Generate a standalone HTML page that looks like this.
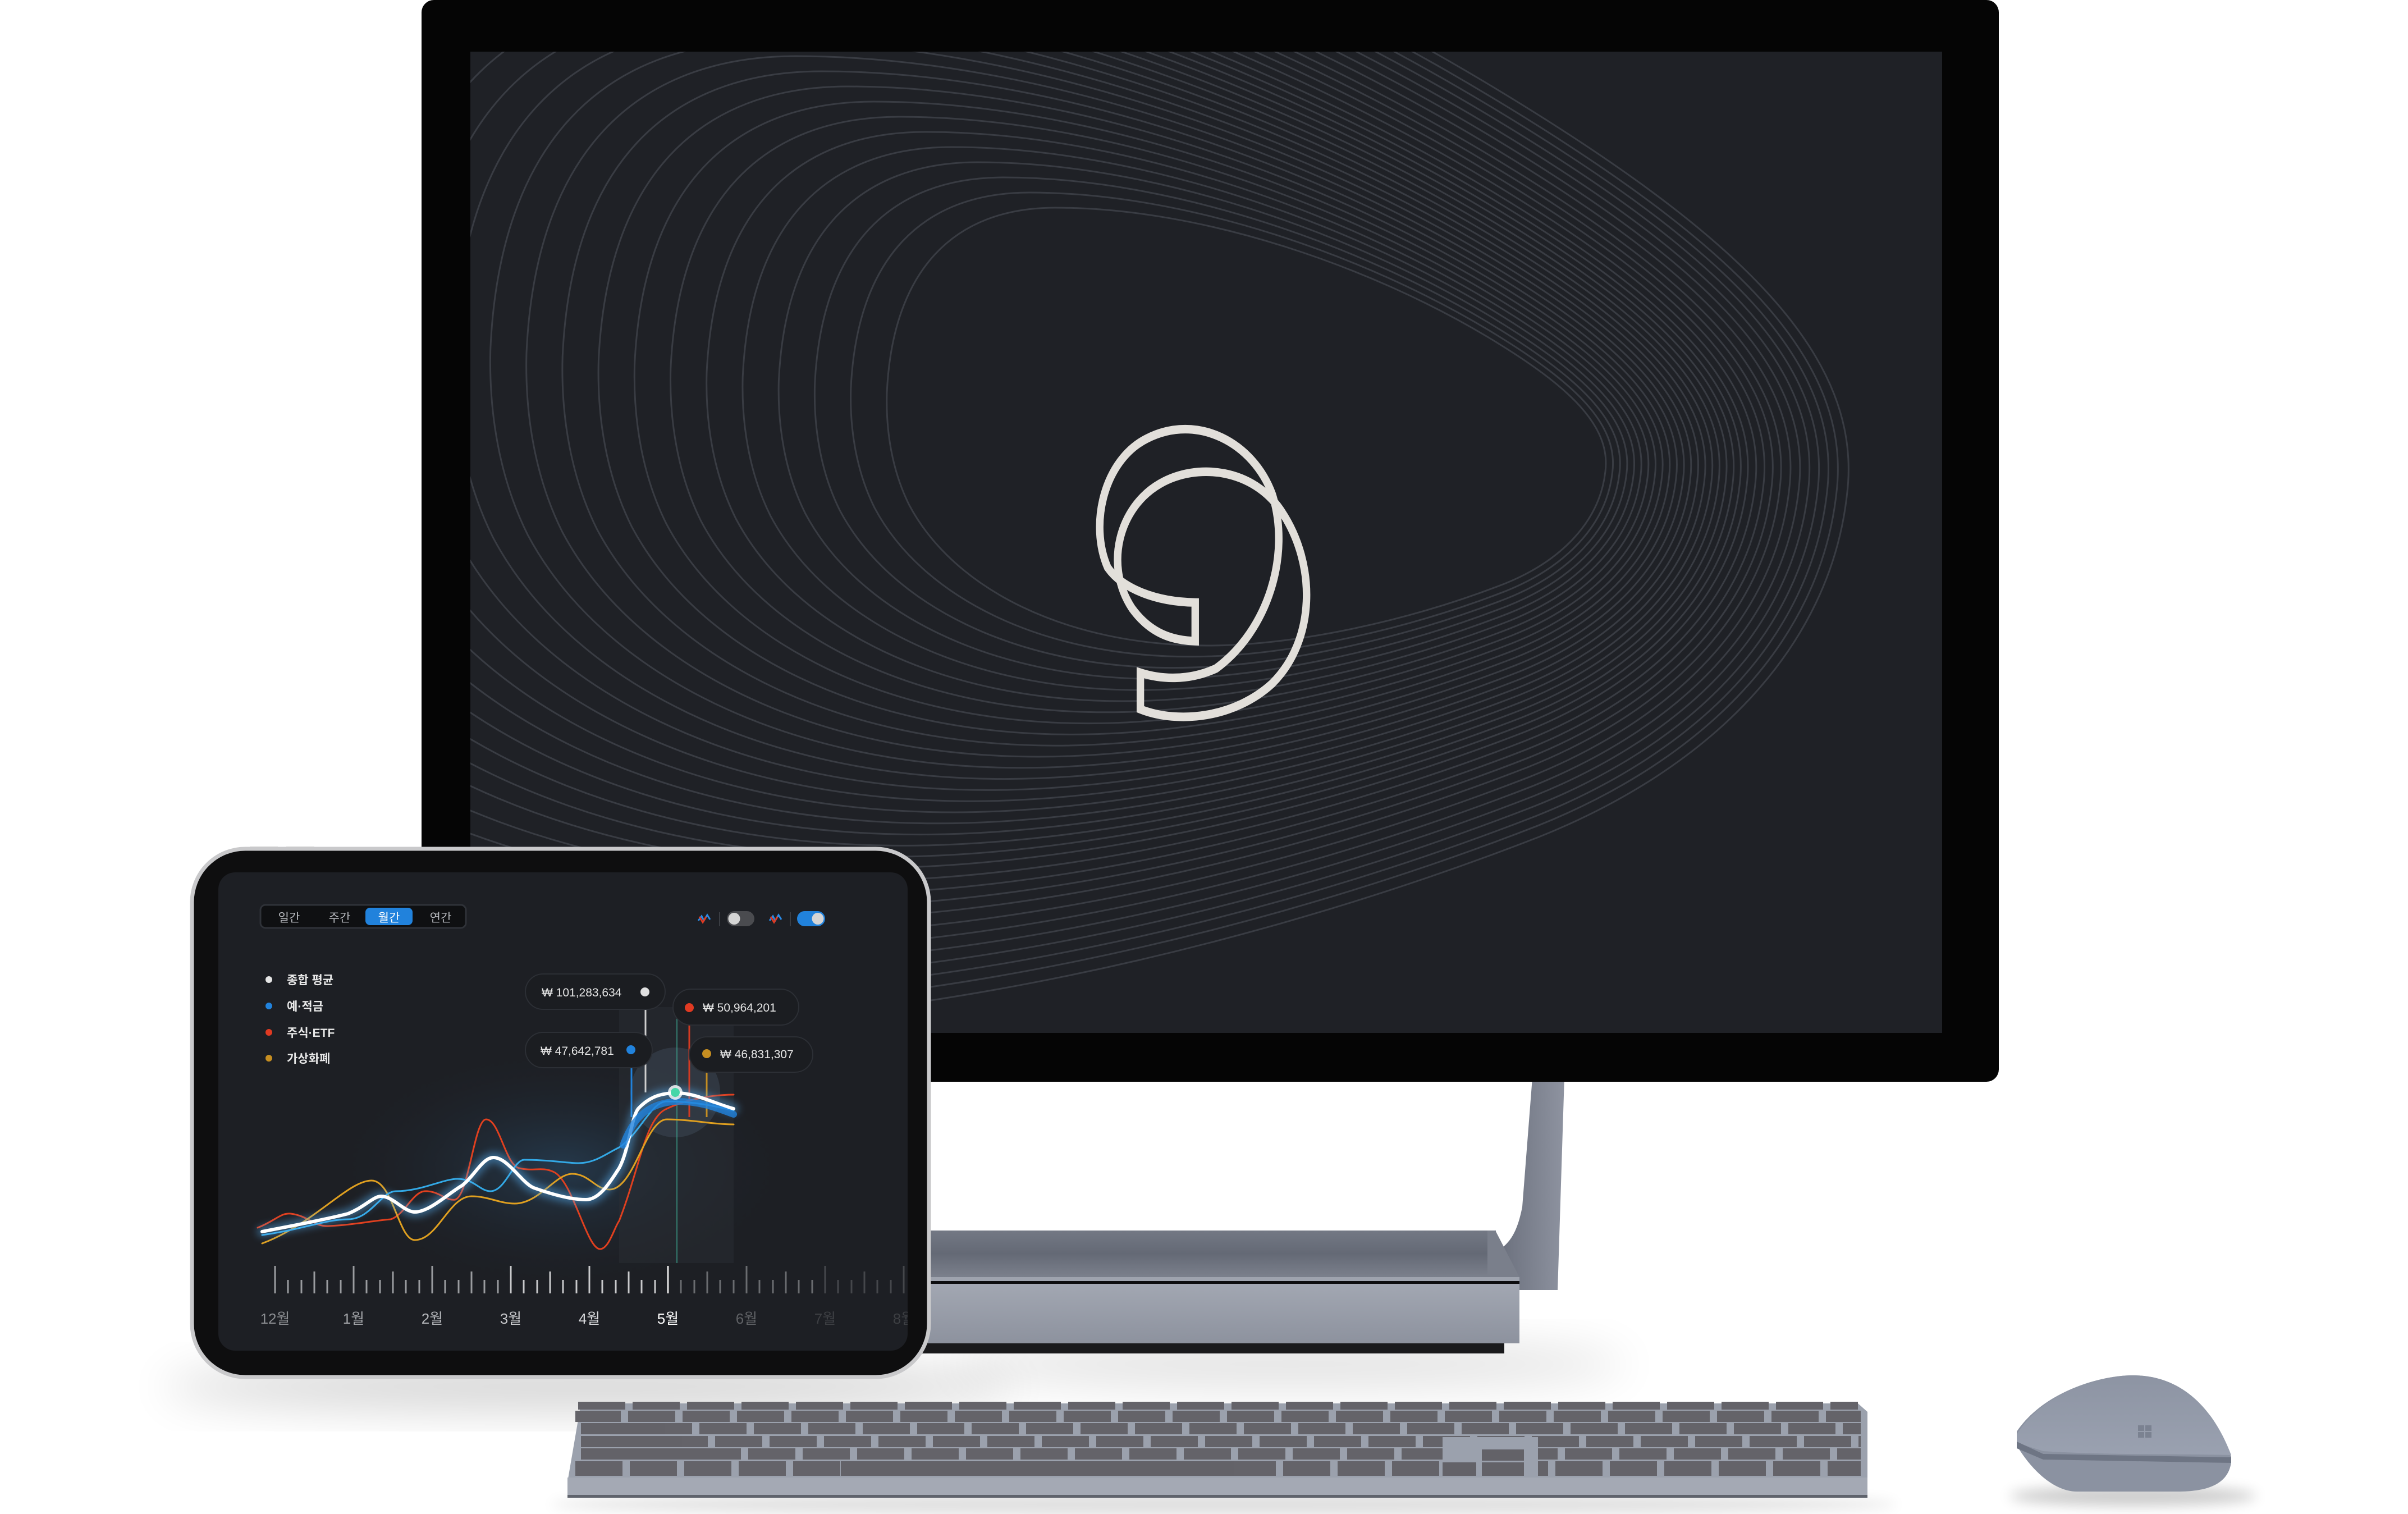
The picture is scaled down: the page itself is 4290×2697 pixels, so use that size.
<!DOCTYPE html>
<html><head><meta charset="utf-8">
<style>
html,body{margin:0;padding:0;background:#fff;width:4290px;height:2697px;overflow:hidden}
svg{display:block}
text{font-family:"Liberation Sans","Noto Sans CJK KR",sans-serif}
</style></head>
<body>
<svg width="4290" height="2697" viewBox="0 0 4290 2697" xmlns="http://www.w3.org/2000/svg">
<defs>
  <filter id="blur40" x="-50%" y="-50%" width="200%" height="200%"><feGaussianBlur stdDeviation="40"/></filter>
  <filter id="blur12" x="-50%" y="-50%" width="200%" height="200%"><feGaussianBlur stdDeviation="12"/></filter>
  <filter id="glow" x="-20%" y="-50%" width="140%" height="200%"><feGaussianBlur stdDeviation="7"/></filter>
  <clipPath id="scr"><rect x="838" y="92" width="2622" height="1748"/></clipPath>
  <clipPath id="tab"><rect x="389" y="1554" width="1228" height="852" rx="30"/></clipPath>
  <clipPath id="kb"><rect x="1025" y="2490" width="2290" height="142"/></clipPath>
  <path id="blob" vector-effect="non-scaling-stroke" d="M1580,700 C1590,480 1700,370 1880,370 C2150,370 2450,480 2650,600 C2800,690 2870,760 2860,840 C2850,930 2780,1000 2680,1040 C2500,1110 2300,1150 2150,1150 C1900,1150 1700,1050 1620,900 C1590,840 1578,770 1580,700 Z"/>
  <linearGradient id="baseTop" x1="0" y1="0" x2="0" y2="1"><stop offset="0" stop-color="#737884"/><stop offset="0.5" stop-color="#646975"/><stop offset="1" stop-color="#7b808c"/></linearGradient>
  <linearGradient id="baseFront" x1="0" y1="0" x2="0" y2="1"><stop offset="0" stop-color="#a2a7b2"/><stop offset="1" stop-color="#8d929e"/></linearGradient>
  <linearGradient id="arm" x1="0" y1="0" x2="1" y2="0"><stop offset="0" stop-color="#4f5360"/><stop offset="0.5" stop-color="#727784"/><stop offset="1" stop-color="#8e93a0"/></linearGradient>
  <linearGradient id="mouseTop" x1="0" y1="0" x2="0" y2="1"><stop offset="0" stop-color="#8d94a3"/><stop offset="1" stop-color="#9aa1b0"/></linearGradient>
  <radialGradient id="chartGlow" cx="0.5" cy="0.5" r="0.5"><stop offset="0" stop-color="#2a4a66" stop-opacity="0.6"/><stop offset="1" stop-color="#1d1f24" stop-opacity="0"/></radialGradient>
  <pattern id="keys" x="1030" y="0" width="97" height="2697" patternUnits="userSpaceOnUse">
    <rect x="0" y="0" width="84" height="2697" fill="#646369"/>
  </pattern>
</defs>

<ellipse cx="1050" cy="2470" rx="760" ry="40" fill="#000" opacity="0.18" filter="url(#blur40)"/>
<ellipse cx="2300" cy="2430" rx="600" ry="40" fill="#000" opacity="0.12" filter="url(#blur40)"/>
<ellipse cx="2180" cy="2680" rx="1200" ry="20" fill="#000" opacity="0.12" filter="url(#blur12)"/>
<ellipse cx="3800" cy="2665" rx="220" ry="18" fill="#000" opacity="0.2" filter="url(#blur12)"/>

<path d="M2730,1920 L2787,1920 L2775,2298 L2600,2298 L2600,2245 C2680,2240 2700,2210 2712,2150 Z" fill="url(#arm)"/>
<rect x="1640" y="2192" width="1025" height="83" fill="url(#baseTop)"/>
<path d="M2650,2192 L2664,2192 L2707,2275 L2650,2275 Z" fill="#7a7f8b"/>
<rect x="1640" y="2275" width="1067" height="7" fill="#9ea3ae"/>
<rect x="1640" y="2282" width="1067" height="5" fill="#0d0d0f"/>
<rect x="1640" y="2287" width="1067" height="106" fill="url(#baseFront)"/>
<rect x="1640" y="2393" width="1040" height="18" fill="#1a1a1c"/>

<rect x="751" y="0" width="2810" height="1927" rx="22" fill="#050505"/>
<rect x="838" y="92" width="2622" height="1748" fill="#1f2126"/>
<g clip-path="url(#scr)" fill="none" stroke="#393c43" stroke-width="3">
    <use href="#blob" transform="translate(2650,820) scale(1.00) translate(-2650,-820)"/>
    <use href="#blob" transform="translate(2650,820) scale(1.06) translate(-2650,-820)"/>
    <use href="#blob" transform="translate(2650,820) scale(1.12) translate(-2650,-820)"/>
    <use href="#blob" transform="translate(2650,820) scale(1.18) translate(-2650,-820)"/>
    <use href="#blob" transform="translate(2650,820) scale(1.24) translate(-2650,-820)"/>
    <use href="#blob" transform="translate(2650,820) scale(1.30) translate(-2650,-820)"/>
    <use href="#blob" transform="translate(2650,820) scale(1.36) translate(-2650,-820)"/>
    <use href="#blob" transform="translate(2650,820) scale(1.42) translate(-2650,-820)"/>
    <use href="#blob" transform="translate(2650,820) scale(1.48) translate(-2650,-820)"/>
    <use href="#blob" transform="translate(2650,820) scale(1.54) translate(-2650,-820)"/>
    <use href="#blob" transform="translate(2650,820) scale(1.60) translate(-2650,-820)"/>
    <use href="#blob" transform="translate(2650,820) scale(1.66) translate(-2650,-820)"/>
    <use href="#blob" transform="translate(2650,820) scale(1.72) translate(-2650,-820)"/>
    <use href="#blob" transform="translate(2650,820) scale(1.78) translate(-2650,-820)"/>
    <use href="#blob" transform="translate(2650,820) scale(1.84) translate(-2650,-820)"/>
    <use href="#blob" transform="translate(2650,820) scale(1.90) translate(-2650,-820)"/>
    <use href="#blob" transform="translate(2650,820) scale(1.96) translate(-2650,-820)"/>
    <use href="#blob" transform="translate(2650,820) scale(2.02) translate(-2650,-820)"/>
    <use href="#blob" transform="translate(2650,820) scale(2.08) translate(-2650,-820)"/>
    <use href="#blob" transform="translate(2650,820) scale(2.14) translate(-2650,-820)"/>
    <use href="#blob" transform="translate(2650,820) scale(2.20) translate(-2650,-820)"/>
    <use href="#blob" transform="translate(2650,820) scale(2.27) translate(-2650,-820)"/>
    <use href="#blob" transform="translate(2650,820) scale(2.34) translate(-2650,-820)"/>
    <use href="#blob" transform="translate(2650,820) scale(2.41) translate(-2650,-820)"/>
    <use href="#blob" transform="translate(2650,820) scale(2.48) translate(-2650,-820)"/>
    <use href="#blob" transform="translate(2650,820) scale(2.56) translate(-2650,-820)"/>
    <use href="#blob" transform="translate(2650,820) scale(2.64) translate(-2650,-820)"/>
    <use href="#blob" transform="translate(2650,820) scale(2.72) translate(-2650,-820)"/>
    <use href="#blob" transform="translate(2650,820) scale(2.80) translate(-2650,-820)"/>
    <use href="#blob" transform="translate(2650,820) scale(2.88) translate(-2650,-820)"/>
    <use href="#blob" transform="translate(2650,820) scale(2.96) translate(-2650,-820)"/>
    <use href="#blob" transform="translate(2650,820) scale(3.05) translate(-2650,-820)"/>
</g>
<g transform="translate(1900,720) scale(0.3333,0.3827)">
  <path d="M688,1103 L688,923 C480,920 300,860 220,760 C120,560 200,260 430,160 C700,40 1000,180 1100,420 C1200,700 1080,1050 800,1230 C650,1290 500,1280 395,1250 L395,1420 C600,1490 900,1460 1100,1300 C1330,1100 1340,750 1150,500 C1000,300 700,270 500,370 C280,480 200,750 350,950 C450,1070 570,1100 688,1103 Z" fill="none" stroke="#e2dfda" stroke-width="40" stroke-linejoin="miter"/>
</g>

<rect x="342" y="1512" width="1313" height="941" rx="95" fill="#0e0e0f" stroke="#c9c9cb" stroke-width="7"/>
<rect x="445" y="1508" width="50" height="5" fill="#c9c9cb"/>
<rect x="510" y="1508" width="50" height="5" fill="#c9c9cb"/>
<rect x="389" y="1554" width="1228" height="852" rx="30" fill="#1d1f24"/>
<g clip-path="url(#tab)">
  <ellipse cx="1000" cy="2080" rx="420" ry="220" fill="url(#chartGlow)"/>
  <rect x="1103" y="1794" width="204" height="456" fill="#2a2d33" opacity="0.5"/>
  <circle cx="1203" cy="1946" r="80" fill="#4a5a6a" opacity="0.35"/>
  <rect x="464" y="1612" width="366" height="41" rx="9" fill="#0f1012" stroke="#2f3238" stroke-width="3"/>
  <rect x="651" y="1617" width="84" height="31" rx="8" fill="#2182dc"/>
  <text x="515" y="1642" font-size="21" fill="#b9bbc0" text-anchor="middle">일간</text>
  <text x="605" y="1642" font-size="21" fill="#b9bbc0" text-anchor="middle">주간</text>
  <text x="693" y="1642" font-size="21" fill="#fff" text-anchor="middle">월간</text>
  <text x="785" y="1642" font-size="21" fill="#b9bbc0" text-anchor="middle">연간</text>
  <path d="M1244,1640 L1250,1632 L1254,1640 L1260,1630 L1265,1638" fill="none" stroke="#2a8ae6" stroke-width="3"/>
  <path d="M1246,1633 L1252,1643 L1258,1633" fill="none" stroke="#e23a22" stroke-width="3"/>
  <rect x="1281" y="1625" width="2" height="25" fill="#3a3d43"/>
  <rect x="1295" y="1623" width="49" height="27" rx="13.5" fill="#4a4b4f"/>
  <circle cx="1308" cy="1636.5" r="10.5" fill="#d5d5d5"/>
  <path d="M1371,1640 L1377,1632 L1381,1640 L1387,1630 L1392,1638" fill="none" stroke="#2a8ae6" stroke-width="3"/>
  <path d="M1373,1633 L1379,1643 L1385,1633" fill="none" stroke="#e23a22" stroke-width="3"/>
  <rect x="1407" y="1625" width="2" height="25" fill="#3a3d43"/>
  <rect x="1420" y="1623" width="50" height="27" rx="13.5" fill="#2182dc"/>
  <circle cx="1457" cy="1636.5" r="10.5" fill="#d5d5d5"/>
  <circle cx="479" cy="1745" r="6" fill="#e5e5e5"/><text x="511" y="1753" font-size="21" font-weight="bold" fill="#e8e8e8">종합 평균</text>
  <circle cx="479" cy="1792" r="6" fill="#2182dc"/><text x="511" y="1800" font-size="21" font-weight="bold" fill="#e8e8e8">예·적금</text>
  <circle cx="479" cy="1839" r="6" fill="#e03a22"/><text x="511" y="1847" font-size="21" font-weight="bold" fill="#e8e8e8">주식·ETF</text>
  <circle cx="479" cy="1885" r="6" fill="#c68e21"/><text x="511" y="1893" font-size="21" font-weight="bold" fill="#e8e8e8">가상화폐</text>
  <line x1="1150" y1="1798" x2="1150" y2="1946" stroke="#cfcfcf" stroke-width="3"/>
  <line x1="1125" y1="1902" x2="1125" y2="1990" stroke="#2182dc" stroke-width="3"/>
  <line x1="1228" y1="1826" x2="1228" y2="1990" stroke="#d33a22" stroke-width="3"/>
  <line x1="1259" y1="1910" x2="1259" y2="1990" stroke="#c68e21" stroke-width="3"/>
  <line x1="1206" y1="1780" x2="1206" y2="2250" stroke="#3fb39a" stroke-width="1.5" opacity="0.8"/>
  <g fill="none" stroke-linecap="round" stroke-linejoin="round" transform="translate(0,1000)">
    <path d="M459,1187 C490,1175 500,1160 518,1162 C550,1166 560,1186 586,1184 C630,1182 660,1175 696,1172 C720,1165 735,1124 756,1122 C780,1120 795,1140 811,1137 C835,1130 845,994 866,994 C890,994 900,1075 925,1081 C950,1087 965,1078 985,1087 C1020,1100 1045,1225 1069,1225 C1085,1225 1095,1185 1103,1175 C1140,1080 1150,990 1188,975 C1230,955 1280,950 1307,950" stroke="#e0401f" stroke-width="3"/>
    <path d="M467,1215 C560,1180 620,1103 662,1103 C700,1103 710,1209 739,1209 C780,1209 800,1131 840,1131 C870,1131 890,1144 917,1144 C960,1144 990,1091 1019,1091 C1050,1091 1060,1119 1086,1119 C1130,1119 1150,994 1188,994 C1230,994 1270,1003 1307,1003" stroke="#e0a020" stroke-width="3"/>
    <path d="M467,1200 C540,1190 580,1172 620,1172 C660,1172 680,1122 705,1122 C750,1122 790,1100 815,1100 C845,1100 855,1122 874,1122 C900,1122 915,1066 934,1066 C980,1066 1010,1072 1031,1072 C1060,1072 1080,1055 1103,1044 C1140,1020 1160,962 1188,962 C1240,962 1280,972 1307,978" stroke="#33a9e6" stroke-width="3"/>
    <path d="M467,1194 C540,1180 590,1170 620,1162 C650,1150 665,1131 679,1131 C700,1131 720,1159 739,1159 C765,1159 800,1125 823,1112 C845,1095 860,1062 879,1062 C905,1062 930,1108 951,1116 C990,1130 1020,1137 1044,1137 C1070,1137 1090,1100 1103,1081 C1120,1050 1125,990 1137,975 C1160,950 1185,947 1205,947 C1240,947 1270,965 1307,975" stroke="#5ab8ff" stroke-width="18" opacity="0.45" filter="url(#glow)"/>
    <path d="M467,1194 C540,1180 590,1170 620,1162 C650,1150 665,1131 679,1131 C700,1131 720,1159 739,1159 C765,1159 800,1125 823,1112 C845,1095 860,1062 879,1062 C905,1062 930,1108 951,1116 C990,1130 1020,1137 1044,1137 C1070,1137 1090,1100 1103,1081 C1120,1050 1125,990 1137,975 C1160,950 1185,947 1205,947 C1240,947 1270,965 1307,975" stroke="#ffffff" stroke-width="6"/>
    <path d="M1110,1040 C1130,985 1160,965 1205,962 C1250,962 1280,975 1307,985" stroke="#2182dc" stroke-width="12" opacity="0.8"/>
  </g>
  <circle cx="1203" cy="1946" r="13" fill="#fff" opacity="0.8"/>
  <circle cx="1203" cy="1946" r="8" fill="#46d6a8"/>
  <rect x="936" y="1735" width="249" height="63" rx="31.5" fill="#1b1d21" stroke="#2c2f35" stroke-width="2"/>
  <text x="965" y="1775" font-size="21" fill="#e6e6e6">₩ 101,283,634</text><circle cx="1149" cy="1767" r="8" fill="#e0e0e0"/>
  <rect x="936" y="1839" width="226" height="63" rx="31.5" fill="#1b1d21" stroke="#2c2f35" stroke-width="2"/>
  <text x="963" y="1879" font-size="21" fill="#e6e6e6">₩ 47,642,781</text><circle cx="1124" cy="1870" r="8" fill="#2182dc"/>
  <rect x="1199" y="1762" width="224" height="64" rx="32" fill="#1b1d21" stroke="#2c2f35" stroke-width="2"/>
  <circle cx="1228" cy="1795" r="8" fill="#e03a22"/><text x="1252" y="1802" font-size="21" fill="#e6e6e6">₩ 50,964,201</text>
  <rect x="1228" y="1847" width="220" height="63" rx="31.5" fill="#1b1d21" stroke="#2c2f35" stroke-width="2"/>
  <circle cx="1259" cy="1877" r="8" fill="#c68e21"/><text x="1283" y="1885" font-size="21" fill="#e6e6e6">₩ 46,831,307</text>
  <g stroke-width="3">
    <g stroke="#9a9ca0">
      <line x1="490" y1="2255" x2="490" y2="2304"/><line x1="513" y1="2280" x2="513" y2="2304"/><line x1="537" y1="2280" x2="537" y2="2304"/><line x1="560" y1="2265" x2="560" y2="2304"/><line x1="583" y1="2280" x2="583" y2="2304"/><line x1="607" y1="2280" x2="607" y2="2304"/>
      <line x1="630" y1="2255" x2="630" y2="2304"/><line x1="653" y1="2280" x2="653" y2="2304"/><line x1="677" y1="2280" x2="677" y2="2304"/><line x1="700" y1="2265" x2="700" y2="2304"/><line x1="723" y1="2280" x2="723" y2="2304"/><line x1="747" y1="2280" x2="747" y2="2304"/>
      <line x1="770" y1="2255" x2="770" y2="2304"/><line x1="793" y1="2280" x2="793" y2="2304"/><line x1="817" y1="2280" x2="817" y2="2304"/><line x1="840" y1="2265" x2="840" y2="2304"/><line x1="863" y1="2280" x2="863" y2="2304"/><line x1="887" y1="2280" x2="887" y2="2304"/>
    </g>
    <g stroke="#c9cacc">
      <line x1="910" y1="2255" x2="910" y2="2304"/><line x1="933" y1="2280" x2="933" y2="2304"/><line x1="957" y1="2280" x2="957" y2="2304"/><line x1="980" y1="2265" x2="980" y2="2304"/><line x1="1003" y1="2280" x2="1003" y2="2304"/><line x1="1027" y1="2280" x2="1027" y2="2304"/>
      <line x1="1050" y1="2255" x2="1050" y2="2304"/><line x1="1073" y1="2280" x2="1073" y2="2304"/><line x1="1097" y1="2280" x2="1097" y2="2304"/><line x1="1120" y1="2265" x2="1120" y2="2304"/><line x1="1143" y1="2280" x2="1143" y2="2304"/><line x1="1167" y1="2280" x2="1167" y2="2304"/>
      <line x1="1190" y1="2255" x2="1190" y2="2304" stroke="#e6e6e6"/>
    </g>
    <g stroke="#6a6c70">
      <line x1="1213" y1="2280" x2="1213" y2="2304"/><line x1="1237" y1="2280" x2="1237" y2="2304"/><line x1="1260" y1="2265" x2="1260" y2="2304"/><line x1="1283" y1="2280" x2="1283" y2="2304"/><line x1="1307" y1="2280" x2="1307" y2="2304"/>
      <line x1="1330" y1="2255" x2="1330" y2="2304"/><line x1="1353" y1="2280" x2="1353" y2="2304"/><line x1="1377" y1="2280" x2="1377" y2="2304"/><line x1="1400" y1="2265" x2="1400" y2="2304"/><line x1="1423" y1="2280" x2="1423" y2="2304"/><line x1="1447" y1="2280" x2="1447" y2="2304"/>
    </g>
    <g stroke="#45474b">
      <line x1="1470" y1="2255" x2="1470" y2="2304"/><line x1="1493" y1="2280" x2="1493" y2="2304"/><line x1="1517" y1="2280" x2="1517" y2="2304"/><line x1="1540" y1="2265" x2="1540" y2="2304"/><line x1="1563" y1="2280" x2="1563" y2="2304"/><line x1="1587" y1="2280" x2="1587" y2="2304"/><line x1="1610" y1="2255" x2="1610" y2="2304"/>
    </g>
  </g>
  <g font-size="26" text-anchor="middle">
    <text x="490" y="2358" fill="#8a8c90">12월</text>
    <text x="630" y="2358" fill="#a0a2a6">1월</text>
    <text x="770" y="2358" fill="#b0b2b6">2월</text>
    <text x="910" y="2358" fill="#c8c9cc">3월</text>
    <text x="1050" y="2358" fill="#d8d9dc">4월</text>
    <text x="1190" y="2358" fill="#ffffff">5월</text>
    <text x="1330" y="2358" fill="#5f6165">6월</text>
    <text x="1470" y="2358" fill="#3d3f43">7월</text>
    <text x="1610" y="2358" fill="#3d3f43">8월</text>
  </g>
</g>

<path d="M1035,2500 L3310,2500 L3327,2515 L3327,2668 L1011,2668 L1011,2640 Z" fill="#9ba1ad"/>
<rect x="1011" y="2632" width="2316" height="31" fill="#a4a9b4"/>
<rect x="1011" y="2663" width="2316" height="5" fill="#5f636c"/>
<g fill="#636268" clip-path="url(#kb)">
  <rect x="1030" y="2497" width="2280" height="14" fill="url(#keys)"/>
  <rect x="1025" y="2513" width="2300" height="20" fill="url(#keys)" transform="translate(-8,0)"/>
  <rect x="1030" y="2535" width="2280" height="20" fill="url(#keys)" transform="translate(22,0)"/>
  <rect x="1030" y="2558" width="2280" height="20" fill="url(#keys)" transform="translate(50,0)"/>
  <rect x="1030" y="2580" width="2280" height="20" fill="url(#keys)" transform="translate(12,0)"/>
  <rect x="1030" y="2603" width="2290" height="26" fill="url(#keys)" transform="translate(-5,0)"/>
  <rect x="1498" y="2603" width="700" height="26"/>
  <rect x="1035" y="2535" width="150" height="20"/>
  <rect x="1035" y="2558" width="180" height="20"/>
  <rect x="1035" y="2580" width="230" height="20"/>
</g>
<rect x="2570" y="2560" width="170" height="70" fill="#9ba1ad"/>
<rect x="2640" y="2582" width="75" height="20" fill="#636268"/>
<rect x="2640" y="2605" width="75" height="24" fill="#636268"/>
<rect x="2570" y="2605" width="60" height="24" fill="#636268"/>

<path d="M3593,2550 C3640,2480 3740,2450 3800,2450 C3880,2450 3940,2500 3975,2595 L3975,2605 C3970,2640 3940,2657 3880,2657 L3700,2657 C3660,2657 3620,2620 3593,2575 Z" fill="#8b92a1"/>
<path d="M3593,2555 C3640,2480 3740,2450 3800,2450 C3880,2450 3940,2500 3975,2592 C3900,2590 3750,2592 3640,2585 L3593,2570 Z" fill="url(#mouseTop)"/>
<path d="M3593,2568 L3640,2590 L3975,2596 L3975,2606 L3640,2600 L3593,2580 Z" fill="#6e7584"/>
<g fill="#7b8291"><rect x="3809" y="2539" width="11" height="10"/><rect x="3822" y="2539" width="11" height="10"/><rect x="3809" y="2551" width="11" height="10"/><rect x="3822" y="2551" width="11" height="10"/></g>
</svg>
</body></html>
